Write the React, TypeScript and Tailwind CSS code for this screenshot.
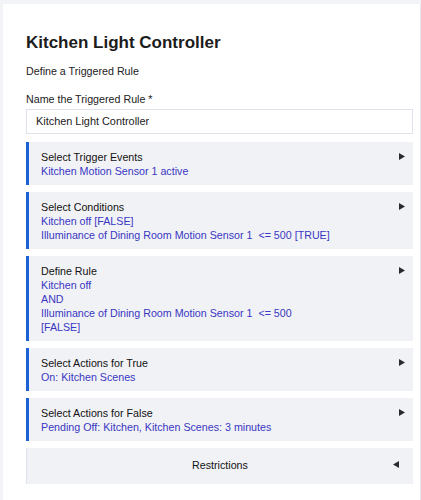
import { ReactNode } from 'react';

const font = { fontFamily: '"Liberation Sans", Arial, sans-serif' };

const RightArrow = () => (
  <svg width="6" height="7" viewBox="0 0 6 7" className="shrink-0">
    <polygon points="0,0 6,3.5 0,7" fill="#2b2b2b" />
  </svg>
);

const LeftArrow = () => (
  <svg width="6" height="7" viewBox="0 0 6 7" className="shrink-0">
    <polygon points="6,0 0,3.5 6,7" fill="#2b2b2b" />
  </svg>
);

const Section = ({ title, children }: { title: string; children: ReactNode }) => (
  <div className="flex bg-[#f1f2f6] mb-[7px]">
    <div className="w-[3px] bg-[#1b62d6] shrink-0" />
    <div className="flex-1 pl-[12px] pr-[8px] py-[7.5px] text-[10.7px] leading-[14px]">
      <div className="flex items-center justify-between h-[14px]">
        <span className="text-[#111]">{title}</span>
        <RightArrow />
      </div>
      <div className="text-[#3a37c2]">{children}</div>
    </div>
  </div>
);

export default function App() {
  return (
    <div className="min-h-[500px] bg-[#f3f4f8] pt-[4px] pl-[3px]" style={font}>
      <div className="bg-white min-h-[496px] pl-[23px] pt-[29px] border-r border-[#e6e8ef]">
        <div className="w-[387px]">
          <h1 className="text-[17px] leading-[20px] font-bold text-[#1c1c1c]">Kitchen Light Controller</h1>
          <p className="mt-[11px] text-[10.7px] leading-[14px] text-[#222]">Define a Triggered Rule</p>
          <p className="mt-[14px] text-[10.7px] leading-[14px] text-[#222]">Name the Triggered Rule *</p>
          <div className="mt-[3px] h-[25px] border border-[#dfe3ec] flex items-center pl-[9px] text-[10.9px] text-[#222]">
            Kitchen Light Controller
          </div>

          <div className="mt-[8px]">
            <Section title="Select Trigger Events">
              <div>Kitchen Motion Sensor 1 active</div>
            </Section>
            <Section title="Select Conditions">
              <div>Kitchen off [FALSE]</div>
              <div className="whitespace-pre">Illuminance of Dining Room Motion Sensor 1  &lt;= 500 [TRUE]</div>
            </Section>
            <Section title="Define Rule">
              <div>Kitchen off</div>
              <div>AND</div>
              <div className="whitespace-pre">Illuminance of Dining Room Motion Sensor 1  &lt;= 500</div>
              <div>[FALSE]</div>
            </Section>
            <Section title="Select Actions for True">
              <div>On: Kitchen Scenes</div>
            </Section>
            <Section title="Select Actions for False">
              <div>Pending Off: Kitchen, Kitchen Scenes: 3 minutes</div>
            </Section>
          </div>

          <div className="mt-[7px] h-[36px] pb-[1px] bg-[#f1f2f6] border-l border-[#dde2ee] flex items-center relative text-[10.7px] text-[#111]">
            <span className="flex-1 text-center">Restrictions</span>
            <div className="absolute right-[14px] top-[13px]">
              <LeftArrow />
            </div>
          </div>
        </div>
      </div>
    </div>
  );
}
